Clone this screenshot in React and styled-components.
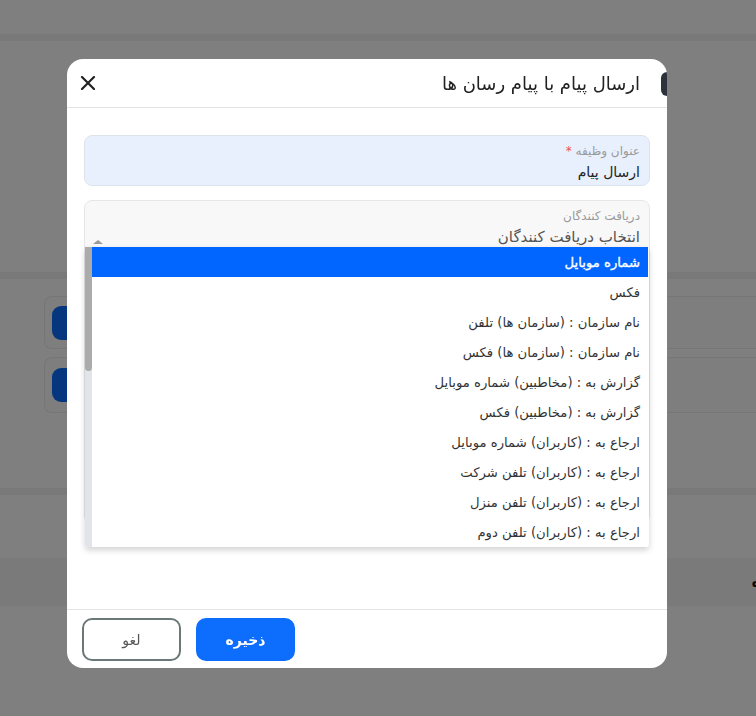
import React from "react";
import styled, { createGlobalStyle } from "styled-components";

const Global = createGlobalStyle`
  html, body { margin: 0; padding: 0; }
  body {
    width: 756px;
    height: 716px;
    overflow: hidden;
    font-family: "DejaVu Sans", "Noto Sans", sans-serif;
    background: #fff;
  }
  * { box-sizing: border-box; }
`;

/* ---------- background page ---------- */
const Page = styled.div`
  width: 756px;
  height: 716px;
  display: flex;
  flex-direction: column;
  background: #fff;
`;
const TopBar = styled.div`
  height: 34px;
  background: #fff;
  flex: none;
`;
const Band = styled.div`
  height: 7px;
  background: #f3f3f3;
  flex: none;
`;
const Spacer = styled.div`
  height: ${(p) => p.$h}px;
  flex: none;
`;
const CardList = styled.div`
  display: flex;
  flex-direction: column;
  gap: 8px;
  padding-left: 44px;
  flex: none;
`;
const BgCard = styled.div`
  height: ${(p) => p.$h}px;
  border: 1px solid #ececec;
  border-right: none;
  border-radius: 8px 0 0 8px;
  background: #fdfdfd;
  padding: 7px 7px;
  display: flex;
  align-items: center;
`;
const BgButton = styled.div`
  width: 40px;
  height: 34px;
  border-radius: 9px;
  background: #0d6efd;
`;
const GreyStrip = styled.div`
  height: 48px;
  background: #f4f4f4;
  flex: none;
  direction: rtl;
  display: flex;
  align-items: center;
  font-weight: bold;
  font-size: 14px;
  color: #111;
  margin-right: -4px;
`;

/* ---------- overlay + modal ---------- */
const Overlay = styled.div`
  position: fixed;
  inset: 0;
  background: rgba(0, 0, 0, 0.5);
  padding: 59px 0 0 67px;
`;
const Modal = styled.div`
  width: 600px;
  height: 609px;
  background: #fff;
  border-radius: 16px;
  direction: rtl;
  display: flex;
  flex-direction: column;
  position: relative;
  overflow: hidden;
`;
const Header = styled.div`
  height: 49px;
  flex: none;
  border-bottom: 1px solid #e2e4e7;
  display: flex;
  align-items: center;
  justify-content: space-between;
  padding: 0 27px 0 12px;
`;
const Title = styled.div`
  font-size: 18px;
  color: #222;
  padding-top: 1px;
`;
const CloseBtn = styled.button`
  border: none;
  background: none;
  padding: 0;
  width: 18px;
  height: 18px;
  display: flex;
  align-items: center;
  justify-content: center;
  margin-bottom: 1px;
`;
const SideTab = styled.div`
  position: absolute;
  right: 0;
  top: 13px;
  width: 6px;
  height: 24px;
  background: #2c313c;
  border-radius: 6px 0 0 6px;
`;
const Body = styled.div`
  flex: 1;
  padding: 27px 17px 0 17px;
  display: flex;
  flex-direction: column;
  gap: 14px;
`;
const Field = styled.div`
  position: relative;
  height: ${(p) => p.$h}px;
  border-radius: 8px;
  border: 1px solid ${(p) => p.$border};
  background: ${(p) => p.$bg};
  padding: 7px 9px 0;
  display: flex;
  flex-direction: column;
  gap: 2px;
`;
const Label = styled.div`
  font-size: 12px;
  color: #9a9a9a;
  line-height: 17px;
`;
const Star = styled.span`
  color: #f05050;
`;
const Value = styled.div`
  font-size: ${(p) => p.$size}px;
  color: ${(p) => p.$color};
  line-height: 20px;
`;
const Dropdown = styled.div`
  position: absolute;
  top: 46px;
  right: 0;
  left: 0;
  height: 300px;
  display: flex;
  flex-direction: row-reverse;
  background: #fff;
  box-shadow: 0 3px 6px rgba(0, 0, 0, 0.18);
  border-radius: 0 0 3px 3px;
`;
const UpArrow = styled.div`
  position: absolute;
  top: -7px;
  left: 8px;
  width: 0;
  height: 0;
  border-left: 5px solid transparent;
  border-right: 5px solid transparent;
  border-bottom: 4px solid #9a9a9a;
`;
const Track = styled.div`
  width: 7px;
  flex: none;
  background: #e1e4e9;
  border-radius: 0 0 0 3px;
`;
const Thumb = styled.div`
  height: 124px;
  background: #ababab;
  border-radius: 0 0 4px 4px;
`;
const Options = styled.div`
  flex: 1;
  display: flex;
  flex-direction: column;
  margin-right: 1px;
`;
const Option = styled.div`
  height: 30px;
  flex: none;
  display: flex;
  align-items: center;
  padding-right: 8px;
  font-size: 13.2px;
  color: ${(p) => (p.$active ? "#fff" : "#333")};
  background: ${(p) => (p.$active ? "#0066ff" : "#fff")};
  -webkit-text-stroke: ${(p) => (p.$active ? "0.35px #fff" : "0")};
`;
const Footer = styled.div`
  height: 59px;
  flex: none;
  border-top: 1px solid #e2e4e7;
  display: flex;
  justify-content: flex-end;
  align-items: flex-start;
  gap: 15px;
  padding: 8px 15px 0;
`;
const Button = styled.button`
  width: 99px;
  height: 43px;
  border-radius: 10px;
  font-family: "DejaVu Sans", sans-serif;
  font-size: 14px;
  border: 2px solid ${(p) => (p.$primary ? "#0d6efd" : "#6b7878")};
  background: ${(p) => (p.$primary ? "#0d6efd" : "#fff")};
  color: ${(p) => (p.$primary ? "#fff" : "#555")};
  font-weight: ${(p) => (p.$primary ? "bold" : "normal")};
  padding: 0;
`;

const options = [
  "شماره موبایل",
  "فکس",
  "نام سازمان : (سازمان ها) تلفن",
  "نام سازمان : (سازمان ها) فکس",
  "گزارش به : (مخاطبین) شماره موبایل",
  "گزارش به : (مخاطبین) فکس",
  "ارجاع به : (کاربران) شماره موبایل",
  "ارجاع به : (کاربران) تلفن شرکت",
  "ارجاع به : (کاربران) تلفن منزل",
  "ارجاع به : (کاربران) تلفن دوم",
];

export default function App() {
  return (
    <>
      <Global />
      <Page>
        <TopBar />
        <Band />
        <Spacer $h={231} />
        <Band />
        <Spacer $h={17} />
        <CardList>
          <BgCard $h={53}>
            <BgButton />
          </BgCard>
          <BgCard $h={56}>
            <BgButton />
          </BgCard>
        </CardList>
        <Spacer $h={75} />
        <Band />
        <Spacer $h={63} />
        <GreyStrip>ه</GreyStrip>
      </Page>
      <Overlay>
        <Modal>
          <SideTab />
          <Header>
            <Title>ارسال پیام با پیام رسان ها</Title>
            <CloseBtn aria-label="close">
              <svg width="16" height="14" viewBox="0 0 16 14">
                <path
                  d="M2 1 L14 13 M14 1 L2 13"
                  stroke="#222"
                  strokeWidth="2.2"
                  strokeLinecap="round"
                />
              </svg>
            </CloseBtn>
          </Header>
          <Body>
            <Field $h={51} $bg="#e8f0fe" $border="#dde3ec">
              <Label>
                عنوان وظیفه <Star>*</Star>
              </Label>
              <Value $color="#222" $size={14}>ارسال پیام</Value>
            </Field>
            <Field $h={324} $bg="#f8f8f8" $border="#e6e6e6">
              <Label>دریافت کنندگان</Label>
              <Value $color="#555" $size={15}>انتخاب دریافت کنندگان</Value>
              <Dropdown>
                <UpArrow />
                <Track>
                  <Thumb />
                </Track>
                <Options>
                  {options.map((o, i) => (
                    <Option key={o} $active={i === 0}>
                      {o}
                    </Option>
                  ))}
                </Options>
              </Dropdown>
            </Field>
          </Body>
          <Footer>
            <Button $primary>ذخیره</Button>
            <Button>لغو</Button>
          </Footer>
        </Modal>
      </Overlay>
    </>
  );
}
